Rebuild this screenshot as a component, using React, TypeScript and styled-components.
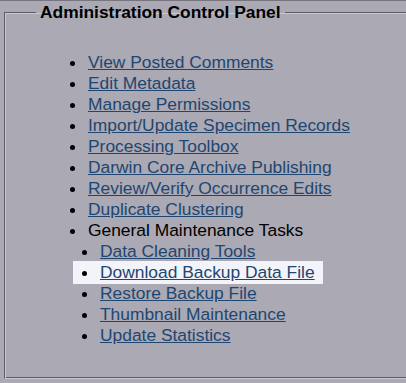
import React from "react";
import styled, { createGlobalStyle } from "styled-components";

const GlobalStyle = createGlobalStyle`
  html, body {
    margin: 0;
    padding: 0;
    background: #aaa9b4;
    overflow: hidden;
  }
  body {
    font-family: "Liberation Sans", Arial, Helvetica, sans-serif;
    font-size: 17.4px;
    color: #000;
  }
`;

type Entry = { label: string; link?: boolean; active?: boolean; children?: Entry[] };

const menu: Entry[] = [
  { label: "View Posted Comments", link: true },
  { label: "Edit Metadata", link: true },
  { label: "Manage Permissions", link: true },
  { label: "Import/Update Specimen Records", link: true },
  { label: "Processing Toolbox", link: true },
  { label: "Darwin Core Archive Publishing", link: true },
  { label: "Review/Verify Occurrence Edits", link: true },
  { label: "Duplicate Clustering", link: true },
  {
    label: "General Maintenance Tasks",
    children: [
      { label: "Data Cleaning Tools", link: true },
      { label: "Download Backup Data File", link: true, active: true },
      { label: "Restore Backup File", link: true },
      { label: "Thumbnail Maintenance", link: true },
      { label: "Update Statistics", link: true },
    ],
  },
];

function App() {
  return (
    <>
      <GlobalStyle />
      <Page>
        <Panel>
          <Legend>Administration Control Panel</Legend>
          <MenuList>
            {menu.map((item) => (
              <MenuItem key={item.label}>
                <Row>
                  <Dot />
                  {item.link ? <MenuLink href="#">{item.label}</MenuLink> : <span>{item.label}</span>}
                </Row>
                {item.children && (
                  <SubList>
                    {item.children.map((sub) => (
                      <SubItem key={sub.label} $active={sub.active}>
                        <Dot />
                        <MenuLink href="#">{sub.label}</MenuLink>
                      </SubItem>
                    ))}
                  </SubList>
                )}
              </MenuItem>
            ))}
          </MenuList>
        </Panel>
      </Page>
    </>
  );
}

export default App;

const Page = styled.div`
  border-top: 1px solid #77767e;
  padding: 1px 0 0 4px;
  height: 382px;
  box-sizing: border-box;
`;

// groove look: dark outer line top/left, light inner line
const Panel = styled.fieldset`
  margin: 0 -20px 0 0;
  padding: 0;
  border: 1px solid;
  border-color: #5d5c63 #c9c8d0 #c9c8d0 #5d5c63;
  box-shadow: inset 1px 1px 0 #c9c8d0, inset -1px -1px 0 #5d5c63;
`;

const Legend = styled.legend`
  margin-left: 31px;
  padding: 0 4px;
  font-weight: bold;
  line-height: 20px;
`;

const MenuList = styled.ul`
  list-style: none;
  margin: 30px 0 32px;
  padding: 0 0 0 65px;
  line-height: 21px;
`;

const MenuItem = styled.li`
  display: block;
`;

const Row = styled.div`
  display: flex;
  gap: 13px;
`;

const Dot = styled.span`
  flex: none;
  width: 5px;
  height: 5px;
  margin-top: 9px;
  border-radius: 50%;
  background: #000;
`;

const SubList = styled.ul`
  list-style: none;
  margin: 0;
  padding: 0 0 0 12px;
`;

const SubItem = styled.li<{ $active?: boolean }>`
  display: flex;
  gap: 13px;
  width: fit-content;
  padding: ${(p) => (p.$active ? "1px 8px 1px 9px" : "0")};
  margin: ${(p) => (p.$active ? "-1px 0 -1px -9px" : "0")};
  background: ${(p) => (p.$active ? "#f3f3fa" : "transparent")};
`;

const MenuLink = styled.a`
  color: #1f4670;
  text-decoration: underline;
  white-space: nowrap;
`;
